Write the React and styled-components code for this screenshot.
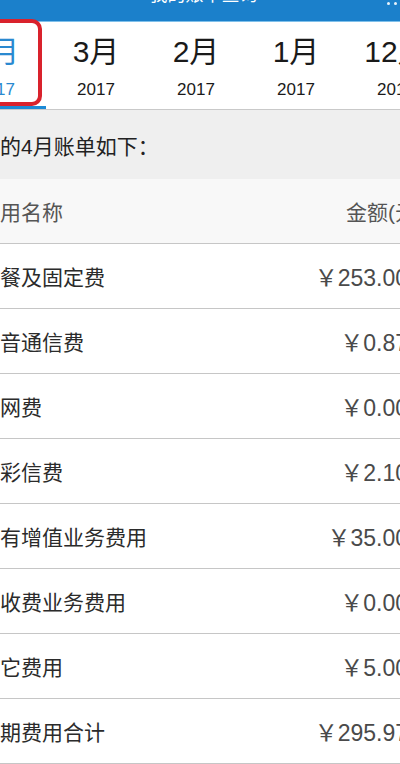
import React from "react";
import styled, { createGlobalStyle } from "styled-components";

const Global = createGlobalStyle`
  html, body { margin: 0; padding: 0; background: #ffffff; }
  body {
    width: 400px;
    overflow: hidden;
    font-family: "Liberation Sans", "Noto Sans CJK SC", sans-serif;
  }
`;

const Page = styled.div`
  position: relative;
  width: 515px;
  margin-left: -54px;
  display: flex;
  flex-direction: column;
`;

const TopBar = styled.div`
  height: 21px;
  background: #1b80cb;
  border-bottom: 1px solid #7fc0ea;
  overflow: hidden;
  display: flex;
  justify-content: center;
  position: relative;
`;

const Title = styled.div`
  color: #ffffff;
  font-size: 18px;
  line-height: 18px;
  margin-top: -14px;
`;

const Dots = styled.div`
  position: absolute;
  top: 2px;
  left: 441px;
  display: flex;
  gap: 4px;
  align-items: center;
  span {
    width: 3px;
    height: 3px;
    border-radius: 50%;
    background: #e8f3fb;
  }
`;

const Tabs = styled.div`
  position: relative;
  display: flex;
  height: 87px;
  background: #ffffff;
  border-bottom: 1px solid #c9c9c9;
`;

const Tab = styled.div`
  width: 100px;
  flex: none;
  display: flex;
  flex-direction: column;
  align-items: center;
  color: ${(p) => (p.$active ? "#2a89d0" : "#1a1a1a")};
  border-bottom: 3px solid ${(p) => (p.$active ? "#1c8ad6" : "transparent")};
  box-sizing: border-box;
`;

const Month = styled.div`
  font-size: 30px;
  line-height: 30px;
  margin-top: 15px;
`;

const Year = styled.div`
  font-size: 17px;
  line-height: 17px;
  margin-top: 14px;
`;

const Highlight = styled.div`
  position: absolute;
  left: 20px;
  top: -3px;
  width: 76px;
  height: 87px;
  border: 4px solid #d9222c;
  border-radius: 10px;
  box-sizing: border-box;
`;

const Intro = styled.div`
  height: 69px;
  background: #efefef;
  display: flex;
  align-items: center;
  padding-left: 33px;
  font-size: 21px;
  color: #222222;
`;

const Row = styled.div`
  height: 64px;
  display: flex;
  align-items: center;
  justify-content: space-between;
  padding: 0 ${(p) => (p.$head ? "38px" : "53px")} 0 33px;
  background: ${(p) => (p.$head ? "#f8f8f8" : "#ffffff")};
  border-bottom: 1px solid #c6c6c6;
  font-size: 21px;
  color: ${(p) => (p.$head ? "#555555" : "#2b2b2b")};
`;

const Amount = styled.span`
  font-size: 23px;
  color: #4a4a4a;
`;

const tabs = [
  { m: "4月", y: "2017", active: true },
  { m: "3月", y: "2017" },
  { m: "2月", y: "2017" },
  { m: "1月", y: "2017" },
  { m: "12月", y: "2016" },
];

const rows = [
  ["套餐及固定费", "￥253.00"],
  ["语音通信费", "￥0.87"],
  ["上网费", "￥0.00"],
  ["短彩信费", "￥2.10"],
  ["自有增值业务费用", "￥35.00"],
  ["代收费业务费用", "￥0.00"],
  ["其它费用", "￥5.00"],
  ["本期费用合计", "￥295.97"],
];

export default function App() {
  return (
    <>
      <Global />
      <Page>
        <TopBar>
          <Title>我的账单查询</Title>
          <Dots>
            <span />
            <span />
            <span />
          </Dots>
        </TopBar>
        <Tabs>
          {tabs.map((t) => (
            <Tab key={t.m} $active={t.active}>
              <Month>{t.m}</Month>
              <Year>{t.y}</Year>
            </Tab>
          ))}
          <Highlight />
        </Tabs>
        <Intro>您的4月账单如下：</Intro>
        <Row $head>
          <span>费用名称</span>
          <span>金额(元)</span>
        </Row>
        {rows.map(([l, a]) => (
          <Row key={l}>
            <span>{l}</span>
            <Amount>{a}</Amount>
          </Row>
        ))}
      </Page>
    </>
  );
}
